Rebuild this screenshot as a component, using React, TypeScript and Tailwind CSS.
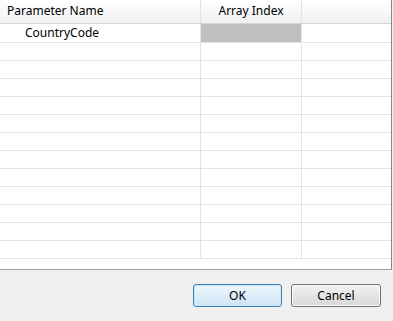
const rows = Array.from({ length: 13 }, (_, i) => i);

const font = { fontFamily: '"Segoe UI", "Noto Sans", "Open Sans", sans-serif' };

export default function App() {
    return (
        <div
            className="w-[393px] h-[321px] bg-[#f0f0f0] flex flex-col text-[12px] text-black"
            style={font}
        >
            {/* table area */}
            <div className="h-[270px] w-[392px] bg-white border-r border-b border-r-[#828790] border-b-[#a0a0a0] overflow-hidden">
                <div className="flex h-[24px] border-b border-[#d5d5d5] bg-gradient-to-b from-white to-[#f0f1f4]">
                    <div className="w-[201px] border-r border-[#e3e3e3] pl-[7px] leading-[22px]">
                        Parameter Name
                    </div>
                    <div className="w-[101px] border-r border-[#e3e3e3] text-center leading-[22px]">
                        Array Index
                    </div>
                    <div className="flex-1" />
                </div>
                {rows.map((i) => (
                    <div
                        key={i}
                        className={`flex border-b border-[#e3e3e3] ${i === 0 ? "h-[19px]" : "h-[18px]"}`}
                    >
                        <div className="w-[201px] border-r border-[#e3e3e3] pl-[25px] leading-[18px]">
                            {i === 0 ? "CountryCode" : ""}
                        </div>
                        <div className="w-[101px] border-r border-[#e3e3e3]">
                            {i === 0 && <div className="h-full w-full bg-[#c0c0c0]" />}
                        </div>
                        <div className="flex-1" />
                    </div>
                ))}
            </div>

            {/* buttons */}
            <div className="flex justify-end gap-[9px] pr-[12px] pt-[14px]">
                <button className="w-[89px] h-[23px] rounded-[3px] border border-[#3c7fb1] bg-gradient-to-b from-[#eef6fc] to-[#cde4f3] shadow-[inset_0_0_0_1px_#c3e9fb]">
                    OK
                </button>
                <button className="w-[90px] h-[23px] rounded-[3px] border border-[#707070] bg-gradient-to-b from-[#f2f2f2] to-[#d8d8d8] shadow-[inset_0_0_0_1px_#fcfcfc]">
                    Cancel
                </button>
            </div>
        </div>
    );
}
